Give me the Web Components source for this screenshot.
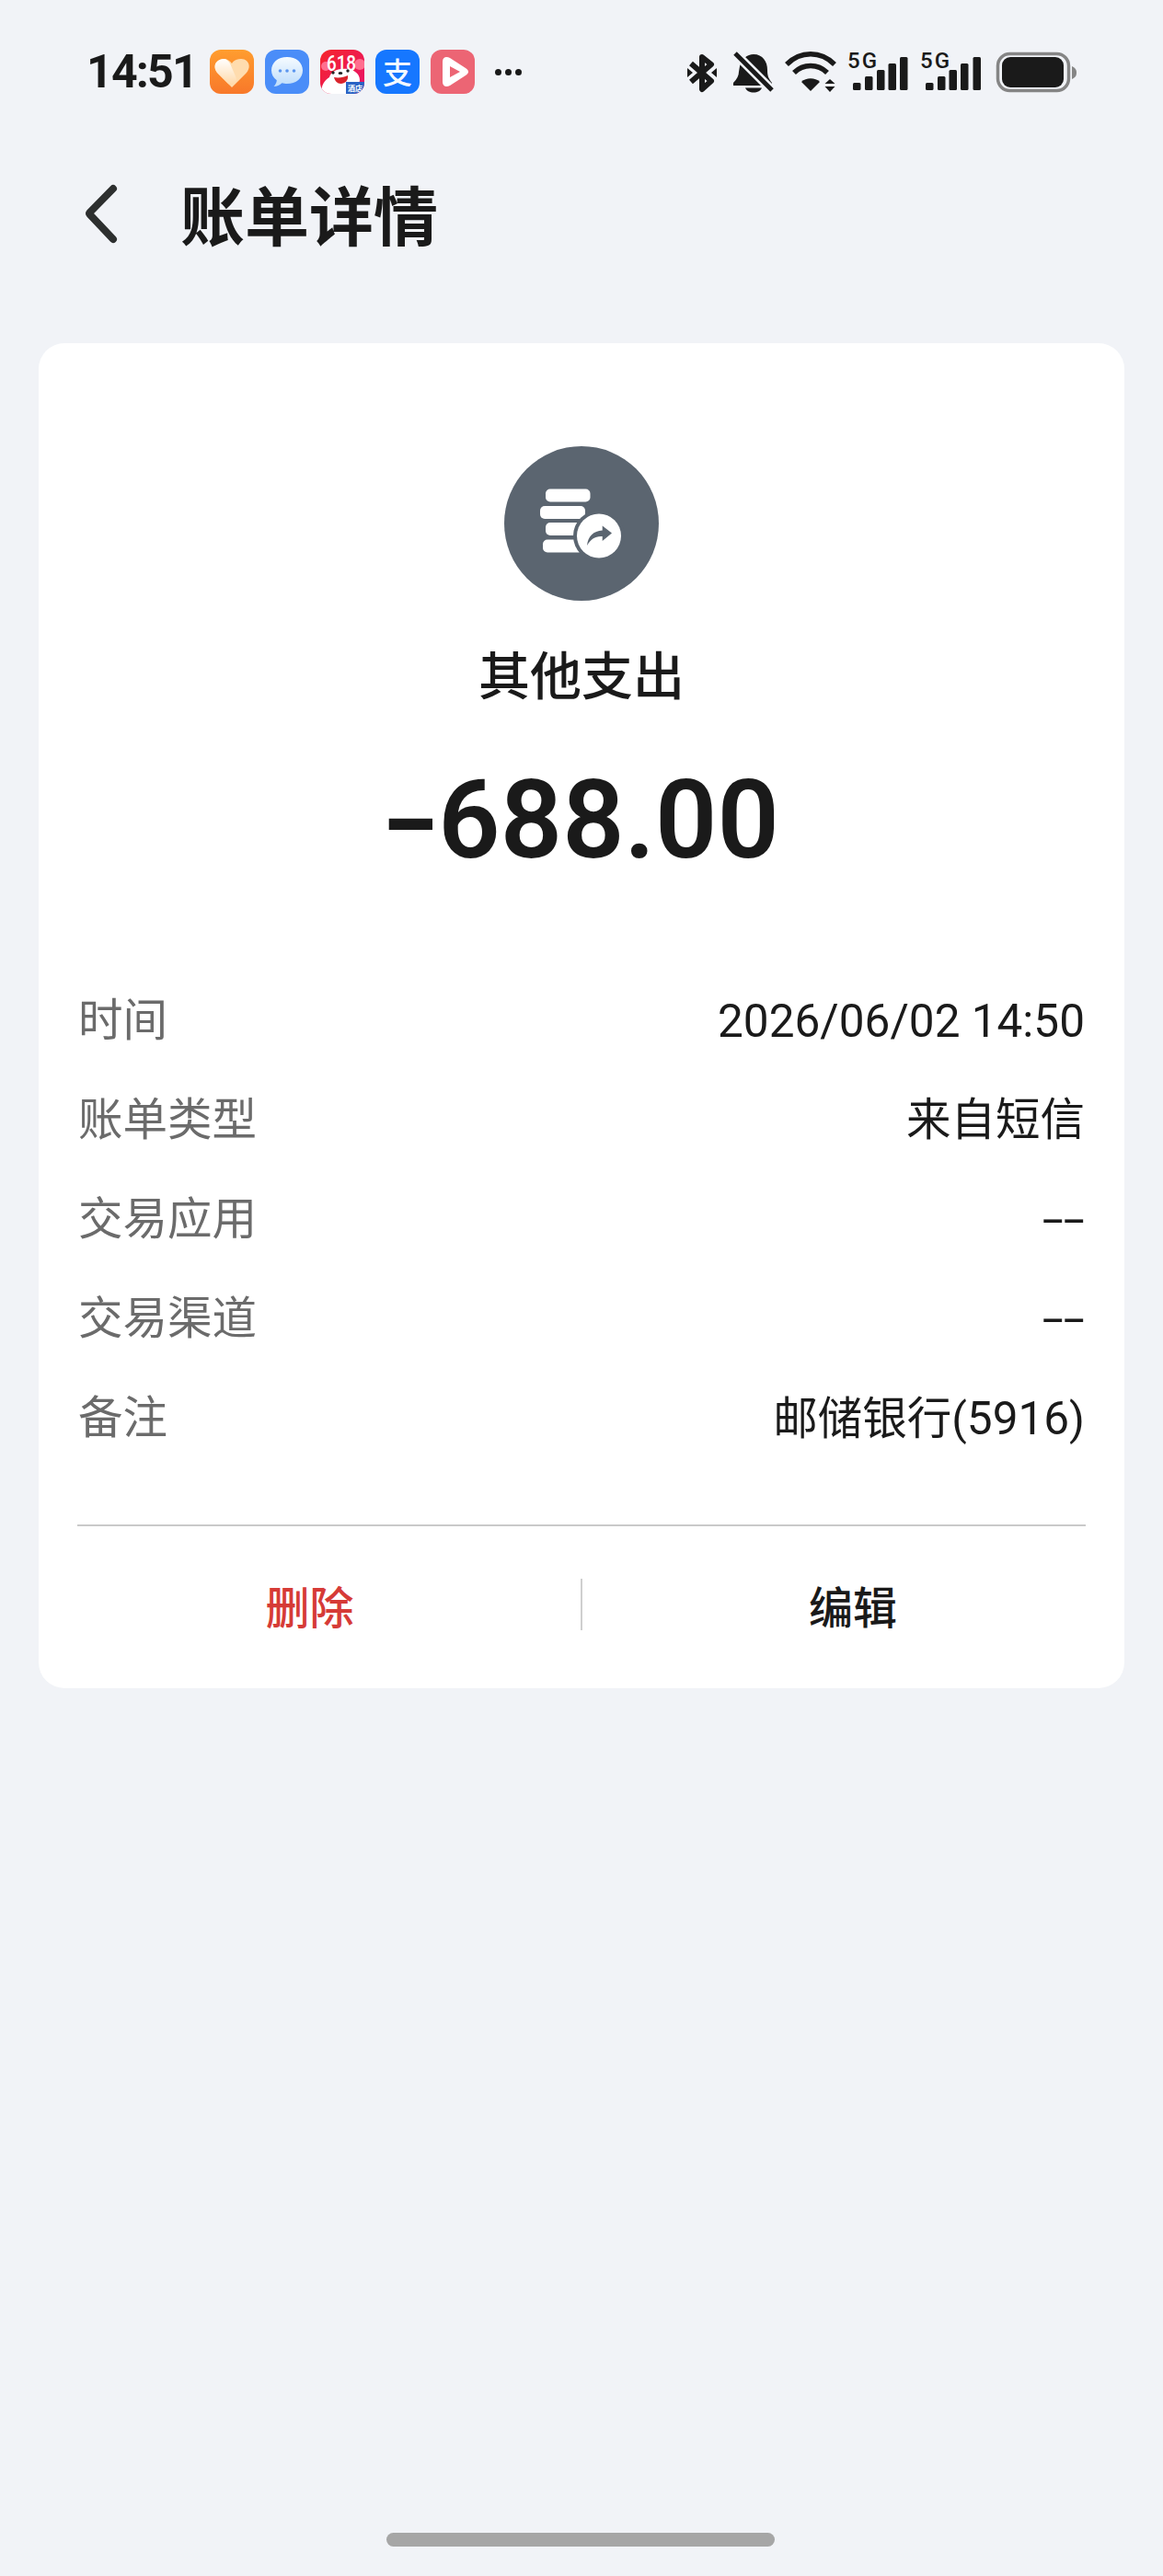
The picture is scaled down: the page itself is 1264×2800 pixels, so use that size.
<!DOCTYPE html>
<html lang="zh-CN">
<head>
<meta charset="utf-8">
<title>账单详情</title>
<style>
  html, body { margin: 0; padding: 0; }
  body {
    width: 1264px;
    height: 2800px;
    background: #f1f3f7;
    display: flex;
    flex-direction: column;
    font-family: Roboto, "Noto Sans CJK SC", sans-serif;
    color: #1a1a1a;
  }
</style>
</head>
<body>
<status-bar time="14:51"></status-bar>
<nav-header>账单详情</nav-header>
<bill-card>
  <bill-summary slot="summary" category="其他支出" amount="688.00"></bill-summary>
  <bill-row label="时间"><span class="num">2026/06/02 14:50</span></bill-row>
  <bill-row label="账单类型">来自短信</bill-row>
  <bill-row label="交易应用" empty>--</bill-row>
  <bill-row label="交易渠道" empty>--</bill-row>
  <bill-row label="备注">邮储银行(<span class="num">5916</span>)</bill-row>
</bill-card>
<home-bar></home-bar>

<script>
const FONT = 'Roboto, "Noto Sans CJK SC", sans-serif';

const statusTemplate = document.createElement("template");
statusTemplate.innerHTML = `
  <style>
    :host { display: flex; align-items: center; height: 160px; box-sizing: border-box; padding: 0 94px 4px 94px; }
    .time { font: 700 50px/48px ${FONT}; letter-spacing: -1.8px; color: #1a1a1a; width: 134px; white-space: nowrap; }
    .apps { display: flex; gap: 12px; }
    .apps svg { display: block; width: 48px; height: 48px; }
    .more { display: flex; gap: 4px; margin-left: 22px; }
    .more i { width: 7px; height: 7px; border-radius: 50%; background: #1a1a1a; }
    .right { margin-left: auto; display: block; width: 432px; height: 68px; }
    text { font-family: Roboto, sans-serif; }
  </style>
  <span class="time"></span>
  <div class="apps">
    <svg viewBox="0 0 48 48">
      <defs>
        <linearGradient id="g1" x1="0" y1="0" x2="0" y2="1"><stop offset="0" stop-color="#ff9d2f"/><stop offset="1" stop-color="#f8782a"/></linearGradient>
        <linearGradient id="g2" x1="0" y1="0" x2="0" y2="1"><stop offset="0" stop-color="#ffffff"/><stop offset="1" stop-color="#ffd9a8"/></linearGradient>
      </defs>
      <rect width="48" height="48" rx="12" fill="url(#g1)"/>
      <path d="M24 41 L8 25 C2 17 8 10 15 10 C19 10 22 12 24 15 C26 12 29 10 34 10 C41 10 46 17 40 25 Z" fill="#ffdcae"/>
      <path d="M15 10 C8 10 2 17 8 25 L20 37 C25 41 31 35 28 29 L22 15 C20 12 18 10 15 10 Z" fill="url(#g2)"/>
    </svg>
    <svg viewBox="0 0 48 48">
      <defs>
        <linearGradient id="g3" x1="0" y1="0" x2="0" y2="1"><stop offset="0" stop-color="#f6fbff"/><stop offset="1" stop-color="#bcdcfb"/></linearGradient>
      </defs>
      <rect width="48" height="48" rx="12" fill="#4a8df8"/>
      <path d="M24 8 C34 8 41 14 41 22.500 C41 31 34 37 24 37 C22 37 20 36.800 18.500 36.300 C16 38.500 13 40 9.500 40 C11.500 38 12.500 36 12.800 33.300 C9 30.500 7 26.800 7 22.500 C7 14 14 8 24 8 Z" fill="url(#g3)"/>
      <circle cx="16.500" cy="23" r="1.800" fill="#5b96ef"/><circle cx="24" cy="23" r="1.800" fill="#5b96ef"/><circle cx="31.500" cy="23" r="1.800" fill="#5b96ef"/>
    </svg>
    <svg viewBox="0 0 48 48">
      <defs>
        <linearGradient id="g4" x1="0" y1="0" x2="1" y2="1"><stop offset="0" stop-color="#f5262c"/><stop offset="1" stop-color="#e8126c"/></linearGradient>
        <clipPath id="c4"><rect width="48" height="48" rx="12"/></clipPath>
      </defs>
      <g clip-path="url(#c4)">
        <rect width="48" height="48" fill="url(#g4)"/>
        <circle cx="6" cy="18" r="5" fill="#ff6f8f"/><circle cx="43" cy="16" r="6" fill="#ff6f8f"/>
        <text x="23" y="23" text-anchor="middle" font-size="24" font-weight="500" fill="#fff" textLength="32" lengthAdjust="spacingAndGlyphs">618</text>
        <path d="M1 48 C1 38 5 33 10 30 C12 23 20 20 30 21 C38 22 43 27 43 33 C43 38 38 41 33 41 L31 48 Z" fill="#fff"/>
        <path d="M15 30 C20 31 26 30 30 28 C31 33 27 37 22.500 37 C18.500 37 16 34 15 30 Z" fill="#d9232b"/>
        <circle cx="14" cy="25" r="1.700" fill="#222"/><circle cx="30" cy="23" r="1.700" fill="#222"/>
        <ellipse cx="22" cy="25.500" rx="2.400" ry="1.500" fill="#222"/>
        <rect x="28" y="35" width="20" height="13" fill="#2a63c4"/>
        <text x="38" y="45" text-anchor="middle" font-size="8" font-weight="700" fill="#fff" style='font-family:"Noto Sans CJK SC"'>酒店</text>
      </g>
    </svg>
    <svg viewBox="0 0 48 48">
      <rect width="48" height="48" rx="12" fill="#1677ff"/>
      <text x="24" y="36.500" text-anchor="middle" font-size="32" font-weight="500" fill="#f4f9ff" style='font-family:"Noto Sans CJK SC"'>支</text>
    </svg>
    <svg viewBox="0 0 48 48">
      <rect width="48" height="48" rx="12" fill="#ec6574"/>
      <path d="M13 13 C13 8 17 7 21 9 L38 20 C42 23 42 25 38 28 L21 39 C17 41 13 40 13 35 Z" fill="#fff"/>
      <path d="M21 18 L32 24 L21 30 Z" fill="#ec6574"/>
    </svg>
  </div>
  <div class="more"><i></i><i></i><i></i></div>
  <!-- viewBox keeps page coordinates so the marks are easy to compare -->
  <svg class="right" viewBox="738 44 432 68">
    <g fill="none" stroke="#1a1a1a" stroke-width="6" stroke-linejoin="round">
      <path d="M751 69 L773 88 L763 97 V62 L773 70 L751 89"/>
    </g>
    <g fill="#1a1a1a">
      <path d="M747 74 l6 5 -6 5 z M779 74 l-6 5 6 5 z"/>
      <path d="M804 72 C806 64 812 59 819 59 C829 59 834 67 834 76 C834 82 835 85 839 90 V93 H797 V90 C801 86 803 82 803 78 Z"/>
      <path d="M810 95.500 H828 C827 98.500 823 100.500 819 100.500 C815 100.500 811 98.500 810 95.500 Z"/>
    </g>
    <path d="M799 58 L839 98" stroke="#f1f3f7" stroke-width="10"/>
    <path d="M799 58 L839 98" stroke="#1a1a1a" stroke-width="5"/>
    <g fill="none" stroke="#1a1a1a" stroke-width="5.500">
      <path d="M855 70 C870 55 892 55 907 70"/>
      <path d="M863 79 C873 69 889 69 899 79"/>
    </g>
    <path d="M871 89 C876 84 886 84 891 89 L881 99 Z" fill="#1a1a1a"/>
    <path d="M902 86 L907.500 91 H896.500 Z M902 100 L907.500 94 H896.500 Z" fill="#1a1a1a"/>
    <text x="921" y="74" font-size="24" font-weight="500" fill="#1a1a1a" textLength="32">5G</text>
    <g fill="#1a1a1a">
      <rect x="927" y="90" width="8.500" height="8" rx="1.500"/><rect x="940" y="83" width="8.500" height="15" rx="1.500"/><rect x="953" y="76" width="8.500" height="22" rx="1.500"/><rect x="965.500" y="69" width="8.500" height="29" rx="1.500"/><rect x="978" y="62" width="8.500" height="36" rx="1.500"/>
    </g>
    <text x="1000" y="74" font-size="24" font-weight="500" fill="#1a1a1a" textLength="32">5G</text>
    <g fill="#1a1a1a">
      <rect x="1006" y="90" width="8.500" height="8" rx="1.500"/><rect x="1019" y="83" width="8.500" height="15" rx="1.500"/><rect x="1031.500" y="76" width="8.500" height="22" rx="1.500"/><rect x="1044" y="69" width="8.500" height="29" rx="1.500"/><rect x="1057.500" y="62" width="8.500" height="36" rx="1.500"/>
    </g>
    <rect x="1084.500" y="58.500" width="77" height="40" rx="13" fill="none" stroke="#858585" stroke-width="3.500"/>
    <rect x="1089" y="62" width="67" height="33" rx="9" fill="#1a1a1a"/>
    <path d="M1165 72 C1169 74 1170 76 1170 79 C1170 82 1169 84 1165 86 Z" fill="#858585"/>
  </svg>
`;

class StatusBar extends HTMLElement {
  constructor() {
    super();
    const shadowRoot = this.attachShadow({ mode: "open" });
    shadowRoot.append(statusTemplate.content.cloneNode(true));
    shadowRoot.querySelector(".time").textContent = this.getAttribute("time");
  }
}
customElements.define("status-bar", StatusBar);

const navTemplate = document.createElement("template");
navTemplate.innerHTML = `
  <style>
    :host { display: flex; align-items: center; height: 146px; box-sizing: border-box; padding: 0 0 2px 90px; }
    svg { display: block; width: 40px; height: 68px; margin-right: 66px; }
    .title { font: 700 70px/96px "Noto Sans CJK SC", sans-serif; color: #1a1a1a; }
  </style>
  <svg viewBox="0 0 40 68" fill="none"><path d="M33 7 L7.500 33 C7 33.600 7 34.400 7.500 35 L33 62" stroke="#2d2f2f" stroke-width="8" stroke-linecap="round" stroke-linejoin="round"/></svg>
  <span class="title"><slot></slot></span>
`;

class NavHeader extends HTMLElement {
  constructor() {
    super();
    const shadowRoot = this.attachShadow({ mode: "open" });
    shadowRoot.append(navTemplate.content.cloneNode(true));
  }
}
customElements.define("nav-header", NavHeader);

const cardTemplate = document.createElement("template");
cardTemplate.innerHTML = `
  <style>
    :host { display: block; margin: 67px 42px 0; background: #fff; border-radius: 28px; }
    .rows { padding: 0 43px; margin-top: 94px; }
    hr { margin: 61px 42px 0; border: 0; height: 2px; background: #c9c9c9; }
    .actions { display: grid; grid-template-columns: 1fr 1fr; margin-top: 57px; padding-bottom: 63px; }
    .actions span { text-align: center; font: 500 48px/56px "Noto Sans CJK SC", sans-serif; }
    .del { color: #d63b37; border-right: 2px solid #cfcfcf; margin-right: -1px; }
    .edit { color: #1a1a1a; }
  </style>
  <slot name="summary"></slot>
  <div class="rows"><slot></slot></div>
  <hr>
  <div class="actions"><span class="del">删除</span><span class="edit">编辑</span></div>
`;

class BillCard extends HTMLElement {
  constructor() {
    super();
    const shadowRoot = this.attachShadow({ mode: "open" });
    shadowRoot.append(cardTemplate.content.cloneNode(true));
  }
}
customElements.define("bill-card", BillCard);

const summaryTemplate = document.createElement("template");
summaryTemplate.innerHTML = `
  <style>
    :host { display: flex; flex-direction: column; align-items: center; padding-top: 112px; }
    svg { display: block; width: 168px; height: 168px; }
    .category { font: 500 56px/72px "Noto Sans CJK SC", sans-serif; color: #1a1a1a; margin-top: 42px; }
    .amount { font: 600 118px/140px Roboto, sans-serif; color: #1a1a1a; margin-top: 55px; white-space: nowrap; }
    .minus { display: inline-block; transform: scaleX(1.5); margin: 0 8px; }
  </style>
  <svg viewBox="0 0 168 168">
    <circle cx="84" cy="84" r="84" fill="#5b6570"/>
    <g fill="#fff">
      <rect x="45" y="46.500" width="48.500" height="14" rx="5"/>
      <rect x="39" y="65" width="49" height="14" rx="5"/>
      <rect x="45" y="83" width="42" height="14" rx="5"/>
      <rect x="42" y="101.500" width="44" height="14" rx="5"/>
    </g>
    <circle cx="103" cy="97.500" r="28" fill="#5b6570"/>
    <circle cx="103" cy="97.500" r="24" fill="#fff"/>
    <path d="M90 108 C91 98 97 92 106.700 91.500 V86.500 L117 94.500 L106.700 103 V98 C99 97.500 94 101 90 108 Z" fill="#5b6570"/>
  </svg>
  <div class="category"></div>
  <div class="amount"><span class="minus">-</span><span class="digits"></span></div>
`;

class BillSummary extends HTMLElement {
  constructor() {
    super();
    const shadowRoot = this.attachShadow({ mode: "open" });
    shadowRoot.append(summaryTemplate.content.cloneNode(true));
    shadowRoot.querySelector(".category").textContent = this.getAttribute("category");
    shadowRoot.querySelector(".digits").textContent = this.getAttribute("amount");
  }
}
customElements.define("bill-summary", BillSummary);

const rowTemplate = document.createElement("template");
rowTemplate.innerHTML = `
  <style>
    :host { display: flex; justify-content: space-between; align-items: center; height: 108px; font: 400 48.5px/56px ${FONT}; }
    .label { color: #6b6b6b; }
    .value { color: #1a1a1a; white-space: nowrap; }
    ::slotted(.num) { font-size: 49.5px; }
    :host([empty]) .value { display: inline-block; transform: scaleX(1.72); transform-origin: right center; }
  </style>
  <span class="label"></span>
  <span class="value"><slot></slot></span>
`;

class BillRow extends HTMLElement {
  constructor() {
    super();
    const shadowRoot = this.attachShadow({ mode: "open" });
    shadowRoot.append(rowTemplate.content.cloneNode(true));
    shadowRoot.querySelector(".label").textContent = this.getAttribute("label");
  }
}
customElements.define("bill-row", BillRow);

const homeTemplate = document.createElement("template");
homeTemplate.innerHTML = `
  <style>
    :host { display: flex; justify-content: center; margin-top: auto; padding: 0 2px 32px 0; }
    div { width: 422px; height: 15px; border-radius: 8px; background: #a6a6a6; }
  </style>
  <div></div>
`;

class HomeBar extends HTMLElement {
  constructor() {
    super();
    const shadowRoot = this.attachShadow({ mode: "open" });
    shadowRoot.append(homeTemplate.content.cloneNode(true));
  }
}
customElements.define("home-bar", HomeBar);
</script>
</body>
</html>
